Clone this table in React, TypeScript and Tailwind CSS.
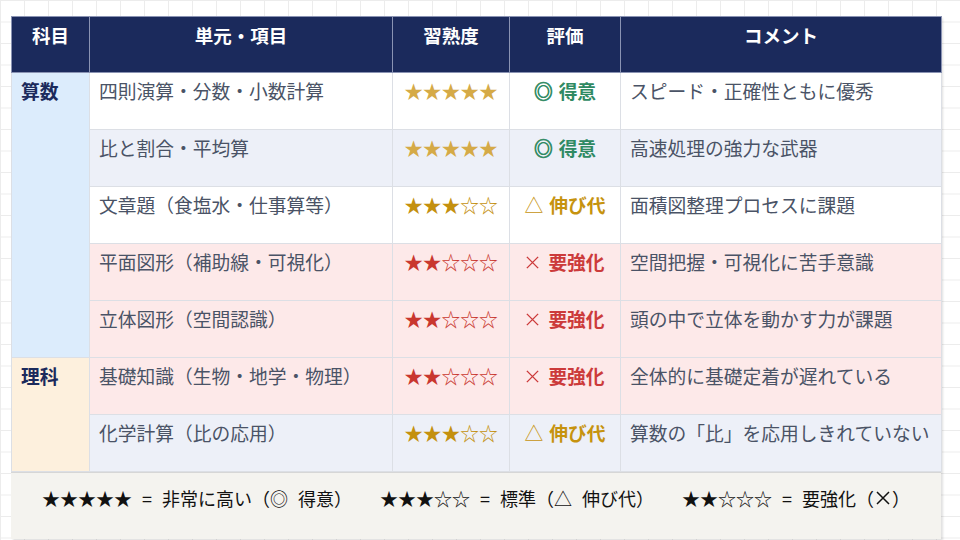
import React from 'react'

type Grade = 'good' | 'mid' | 'weak'

const Cross = ({ size = 15, className = '' }: { size?: number; className?: string }) => (
  <svg width={size} height={size} viewBox="0 0 16 16" className={`inline-block ${className}`} fill="none" stroke="currentColor" strokeWidth={1.5}>
    <path d="M2 2 L14 14 M14 2 L2 14" />
  </svg>
)

const GRADE: Record<Grade, { label: string; text: string; star: string }> = {
  good: { label: '得意', text: 'text-[#2f8a63]', star: 'text-[#d5aa47]' },
  mid: { label: '伸び代', text: 'text-[#c6930f]', star: 'text-[#c4900f]' },
  weak: { label: '要強化', text: 'text-[#cc3b3b]', star: 'text-[#c9372f]' },
}

const ROWS: { item: string; stars: number; grade: Grade; comment: string; bg: string }[] = [
  { item: '四則演算・分数・小数計算', stars: 5, grade: 'good', comment: 'スピード・正確性ともに優秀', bg: 'bg-white' },
  { item: '比と割合・平均算', stars: 5, grade: 'good', comment: '高速処理の強力な武器', bg: 'bg-[#edf0f8]' },
  { item: '文章題（食塩水・仕事算等）', stars: 3, grade: 'mid', comment: '面積図整理プロセスに課題', bg: 'bg-white' },
  { item: '平面図形（補助線・可視化）', stars: 2, grade: 'weak', comment: '空間把握・可視化に苦手意識', bg: 'bg-[#fde9e9]' },
  { item: '立体図形（空間認識）', stars: 2, grade: 'weak', comment: '頭の中で立体を動かす力が課題', bg: 'bg-[#fde9e9]' },
  { item: '基礎知識（生物・地学・物理）', stars: 2, grade: 'weak', comment: '全体的に基礎定着が遅れている', bg: 'bg-[#fde9e9]' },
  { item: '化学計算（比の応用）', stars: 3, grade: 'mid', comment: '算数の「比」を応用しきれていない', bg: 'bg-[#edf0f8]' },
]

const HEAD = ['科目', '単元・項目', '習熟度', '評価', 'コメント']

function Mark({ grade }: { grade: Grade }) {
  if (grade === 'good') return <span className="mr-[6px] font-bold [-webkit-text-stroke:0.7px]">◎</span>
  if (grade === 'mid') return <span className="mr-[6px] font-normal">△</span>
  return <Cross className="mr-[8px] mb-[4px] align-middle" />
}

export default function App() {
  return (
    <div className="min-h-[540px] w-[960px] overflow-hidden bg-white bg-[linear-gradient(to_right,#ececec_1px,transparent_1px),linear-gradient(to_bottom,#ececec_1px,transparent_1px)] bg-[size:24px_21.5px] pt-4 pl-[11px] font-['Noto_Sans_CJK_JP','Noto_Sans',sans-serif]">
      <div className="w-[930px] shadow-[2px_2px_2px_rgba(0,0,0,0.12)]">
        <table className="w-[930px] table-fixed border-collapse text-[18.75px] leading-[26px]">
          <colgroup>
            <col className="w-[78px]" />
            <col className="w-[303px]" />
            <col className="w-[117px]" />
            <col className="w-[111px]" />
            <col className="w-[321px]" />
          </colgroup>
          <thead>
            <tr className="h-[56px] bg-[#1b2a5c]">
              {HEAD.map(h => (
                <th key={h} className="border border-[#8a93b3] pt-[5px] align-top text-center text-[18.5px] font-semibold text-white">
                  {h}
                </th>
              ))}
            </tr>
          </thead>
          <tbody>
            {ROWS.map((r, i) => {
              const g = GRADE[r.grade]
              return (
                <tr key={r.item} className={`h-[57px] ${r.bg}`}>
                  {i === 0 && (
                    <td rowSpan={5} className="border border-[#dcdfe5] bg-[#dcecfc] pl-[9px] pt-[5px] align-top font-bold text-[#1b2a5c]">
                      算数
                    </td>
                  )}
                  {i === 5 && (
                    <td rowSpan={2} className="border border-[#dcdfe5] bg-[#fdf0dd] pl-[9px] pt-[5px] align-top font-bold text-[#1b2a5c]">
                      理科
                    </td>
                  )}
                  <td className="border border-[#dcdfe5] pl-[9px] pt-[5px] align-top text-[#4a5366]">{r.item}</td>
                  <td className={`border border-[#dcdfe5] pt-[5px] align-top text-center ${g.star}`}>
                    {'★'.repeat(r.stars) + '☆'.repeat(5 - r.stars)}
                  </td>
                  <td className={`border border-[#dcdfe5] pt-[5px] align-top text-center font-bold ${g.text}`}>
                    <Mark grade={r.grade} />
                    {g.label}
                  </td>
                  <td className="border border-[#dcdfe5] pl-[9px] pt-[5px] align-top text-[#4a5366]">{r.comment}</td>
                </tr>
              )
            })}
          </tbody>
        </table>
        <div className="flex h-[67px] items-start justify-center gap-[28px] border-t border-[#d6d6d6] bg-[#f4f3ef] pt-[12px] text-[18px] leading-[26px] text-[#111]">
          <span className="flex">
            <span>★★★★★</span>
            <span className="mx-[10px]">=</span>
            <span>非常に高い（</span>
            <span className="mr-[10px]">◎</span>
            <span>得意）</span>
          </span>
          <span className="flex">
            <span>★★★☆☆</span>
            <span className="mx-[10px]">=</span>
            <span>標準（</span>
            <span className="mr-[10px]">△</span>
            <span>伸び代）</span>
          </span>
          <span className="flex items-center">
            <span>★★☆☆☆</span>
            <span className="mx-[10px]">=</span>
            <span>要強化（</span>
            <Cross size={16} className="mx-[1px]" />
            <span>）</span>
          </span>
        </div>
      </div>
    </div>
  )
}
